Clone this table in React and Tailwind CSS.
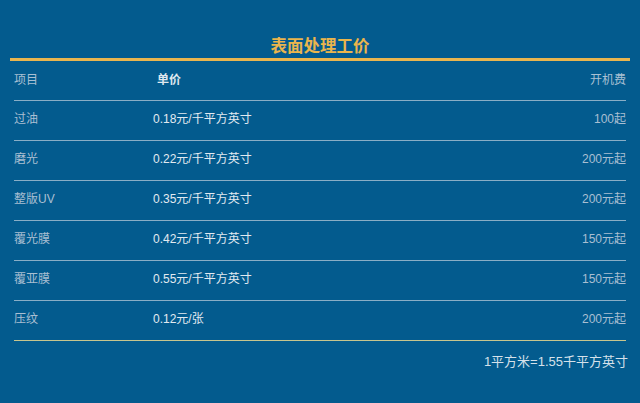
const rows = [
  { name: "过油", price: "0.18元/千平方英寸", fee: "100起" },
  { name: "磨光", price: "0.22元/千平方英寸", fee: "200元起" },
  { name: "整版UV", price: "0.35元/千平方英寸", fee: "200元起" },
  { name: "覆光膜", price: "0.42元/千平方英寸", fee: "150元起" },
  { name: "覆亚膜", price: "0.55元/千平方英寸", fee: "150元起" },
  { name: "压纹", price: "0.12元/张", fee: "200元起" },
];

const App = () => {
  return (
    <div
      className="w-[640px] h-[403px] bg-[#035b8e] pt-[35px] overflow-hidden"
      style={{ fontFamily: '"Liberation Sans", "Noto Sans CJK SC", sans-serif' }}
    >
      <h2 className="text-center text-[16.5px] leading-[22px] font-bold text-[#eab54c]">
        表面处理工价
      </h2>
      <div className="mx-[10px] mt-[1px] h-[3px] bg-[#e9b54f]"></div>

      <div className="mx-[14px]">
        <div className="flex items-center h-[40px] border-b border-[#8aaec6] text-[12px] pb-[1px]">
          <div className="w-[139px] text-[#a9c0d3]">项目</div>
          <div className="flex-1 pl-[4px] font-semibold text-[#dfe8ef]">单价</div>
          <div className="text-[#a9c0d3]">开机费</div>
        </div>
        {rows.map((r, i) => (
          <div
            key={r.name}
            className={
              "flex items-center h-[40px] border-b text-[12px] pb-[3px] " +
              (i === rows.length - 1 ? "border-[#c8c58d]" : "border-[#8aaec6]")
            }
          >
            <div className="w-[139px] text-[#a9bfd2]">{r.name}</div>
            <div className="flex-1 text-[#e2eaf1]">{r.price}</div>
            <div className="text-[#a9bfd2]">{r.fee}</div>
          </div>
        ))}
        <div className="text-right text-[13px] text-[#d6e1ea] pt-[11px] -mr-[2px]">
          1平方米=1.55千平方英寸
        </div>
      </div>
    </div>
  );
};

export default App;
